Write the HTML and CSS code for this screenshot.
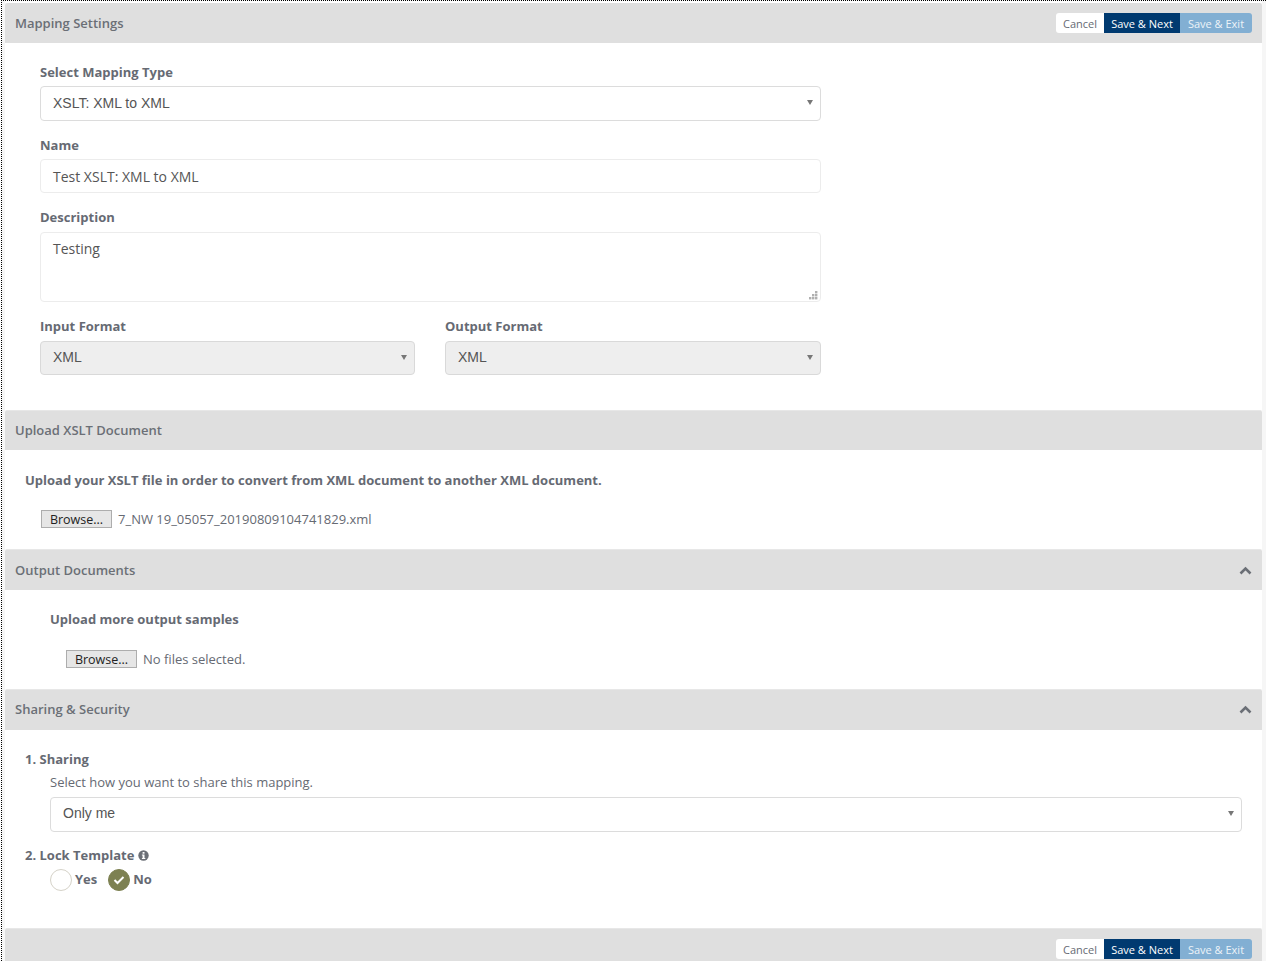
FILE: index.html
```html
<!DOCTYPE html>
<html lang="en">
<head>
<meta charset="utf-8">
<title>Mapping Settings</title>
<link rel="stylesheet" href="styles.css">
</head>
<body>
<div class="frame">
  <div class="page">
    <header class="bar bar-top">
      <h2 class="bar-title">Mapping Settings</h2>
      <div class="btn-group">
        <button class="btn btn-cancel" type="button">Cancel</button>
        <button class="btn btn-next" type="button">Save &amp; Next</button>
        <button class="btn btn-exit" type="button">Save &amp; Exit</button>
      </div>
    </header>
    <section class="settings">
      <div class="settings-col">
        <div class="field field-type">
          <label class="label">Select Mapping Type</label>
          <div class="select select-arial">XSLT: XML to XML<span class="caret"></span></div>
        </div>
        <div class="field field-name">
          <label class="label">Name</label>
          <div class="input">Test XSLT: XML to XML</div>
        </div>
        <div class="field field-desc">
          <label class="label">Description</label>
          <div class="textarea">Testing
            <svg class="grip" width="9" height="9" viewBox="0 0 9 9"><g fill="#b0b0b0"><rect x="6" y="0" width="2.4" height="2.4"/><rect x="3" y="3" width="2.4" height="2.4"/><rect x="6" y="3" width="2.4" height="2.4"/><rect x="0" y="6" width="2.4" height="2.4"/><rect x="3" y="6" width="2.4" height="2.4"/><rect x="6" y="6" width="2.4" height="2.4"/></g></svg>
          </div>
        </div>
        <div class="field-row">
          <div class="field">
            <label class="label">Input Format</label>
            <div class="select select-off">XML<span class="caret"></span></div>
          </div>
          <div class="field">
            <label class="label">Output Format</label>
            <div class="select select-off">XML<span class="caret"></span></div>
          </div>
        </div>
      </div>
    </section>

    <header class="bar bar-upload"><h2 class="bar-title">Upload XSLT Document</h2></header>
    <section class="upload">
      <p class="strong-line">Upload your XSLT file in order to convert from XML document to another XML document.</p>
      <div class="file-row">
        <span class="browse">Browse...</span><span class="file-name">7_NW 19_05057_20190809104741829.xml</span>
      </div>
    </section>

    <header class="bar bar-output">
      <h2 class="bar-title">Output Documents</h2>
      <svg class="chev" width="13" height="9" viewBox="0 0 13 9"><path d="M1.5 7.5 6.5 2.5 11.5 7.5" fill="none" stroke="#6b6f76" stroke-width="2.6"/></svg>
    </header>
    <section class="output">
      <p class="strong-line">Upload more output samples</p>
      <div class="file-row">
        <span class="browse">Browse...</span><span class="file-name">No files selected.</span>
      </div>
    </section>

    <header class="bar bar-share">
      <h2 class="bar-title">Sharing &amp; Security</h2>
      <svg class="chev" width="13" height="9" viewBox="0 0 13 9"><path d="M1.5 7.5 6.5 2.5 11.5 7.5" fill="none" stroke="#6b6f76" stroke-width="2.6"/></svg>
    </header>
    <section class="share">
      <div class="label num">1. Sharing</div>
      <div class="hint">Select how you want to share this mapping.</div>
      <div class="select select-arial select-wide">Only me<span class="caret"></span></div>
      <div class="label num lock">2. Lock Template
        <svg class="info" width="11" height="11" viewBox="0 0 11 11"><circle cx="5.5" cy="5.5" r="5.2" fill="#6b6f76"/><rect x="4.6" y="2" width="1.9" height="1.7" fill="#fff"/><path d="M3.9 4.6H6.5V8H7.3V9H3.9V8H4.6V5.6H3.9Z" fill="#fff"/></svg>
      </div>
      <div class="radios">
        <span class="radio"></span><span class="radio-text">Yes</span>
        <span class="radio radio-on"><svg width="12" height="10" viewBox="0 0 12 10"><path d="M1.5 5 4.5 8 10.5 2" fill="none" stroke="#fff" stroke-width="2"/></svg></span><span class="radio-text">No</span>
      </div>
    </section>

    <footer class="bar bar-bottom">
      <div class="btn-group">
        <button class="btn btn-cancel" type="button">Cancel</button>
        <button class="btn btn-next" type="button">Save &amp; Next</button>
        <button class="btn btn-exit" type="button">Save &amp; Exit</button>
      </div>
    </footer>
  </div>
</div>
</body>
</html>
```
FILE: styles.css
```css
* { box-sizing: border-box; }
html, body { margin: 0; padding: 0; height: 100%; overflow: hidden; background: #fff; }
body { font-family: "Open Sans", sans-serif; font-size: 14px; color: #666a73; }
.frame { height: 961px; border-top: 1px dotted #000; border-left: 1px dotted #000; background: #f6f6f6; padding: 0 4px 0 3px; margin-left: 1px; }
.page { background: #fff; padding-top: 2px; }
.bar { display: flex; align-items: center; justify-content: space-between; background: #dfdfdf; padding: 0 10px; height: 40px; border-radius: 2px 2px 0 0; }
.bar-title { margin: 0; font-size: 13px; font-weight: 600; color: #6b6f76; }
.btn-group { display: flex; margin-right: 0; }
.btn { height: 20px; padding: 0; border: 0; font: 400 11px "Open Sans", sans-serif; }
.btn-cancel { width: 48px; background: #fff; color: #666a73; border-radius: 3px 0 0 3px; }
.btn-next { width: 76px; background: #003a70; color: #fff; }
.btn-exit { width: 72px; background: #82afd3; color: #edf3f8; border-radius: 0 3px 3px 0; }
.settings { height: 367px; padding: 19px 0 0 35px; }
.settings-col { width: 781px; }
.label { display: block; font-size: 13px; font-weight: 700; color: #666a73; line-height: 20px; }
.field { display: flex; flex-direction: column; gap: 4px; }
.field-name { margin-top: 14px; }
.field-desc { margin-top: 14px; gap: 5px; }
.field-row { display: grid; grid-template-columns: 375px 376px; gap: 30px; margin-top: 14px; }
.field-row .field { gap: 5px; }
.select, .input, .textarea { position: relative; border: 1px solid #e3e3e3; border-radius: 4px; background: #fff; padding: 0 12px; font-size: 14px; color: #555; }
.select { height: 35px; line-height: 32px; border-color: #dcdcdc; }
.select-arial, .select-off { font-family: "Liberation Sans", sans-serif; }
.select-off { background: #eee; border-color: #d9d9d9; height: 34px; line-height: 31px; }
.input { height: 34px; line-height: 34px; border-color: #ececec; }
.textarea { height: 70px; line-height: 20px; padding-top: 6px; border-color: #ececec; }
.grip { position: absolute; right: 2px; bottom: 1px; }
.caret { position: absolute; right: 7px; top: 13px; width: 0; height: 0; border: 3px solid transparent; border-top: 5px solid #777; border-bottom: 0; }
.bar-upload, .bar-output, .bar-share { border-top: 1px solid #e7e7e7; }
.bar-upload { padding-bottom: 1px; }
.upload { height: 99px; padding: 20px 0 0 20px; }
.strong-line { margin: 0; font-size: 13px; font-weight: 700; line-height: 20px; color: #666a73; }
.file-row { display: flex; align-items: center; margin-top: 20px; height: 18px; }
.upload .file-row { margin-left: 16px; }
.browse { display: inline-block; width: 71px; height: 18px; text-align: center; background: #e6e6e6; border: 1px solid #adadad; font: 400 12.5px/18px "Open Sans", sans-serif; color: #222; }
.file-name { margin-left: 6px; font-size: 13px; color: #666a73; }
.bar-output { height: 41px; }
.output { height: 99px; padding: 19px 0 0 45px; }
.output .file-row { margin-left: 16px; margin-top: 21px; }
.bar-share { height: 41px; padding-bottom: 1px; }
.bar-share .bar-title { margin-bottom: 2px; }
.share { height: 198px; padding: 19px 20px 0; }
.hint { margin: 3px 0 0 25px; font-size: 13px; line-height: 20px; color: #666a73; }
.select-wide { margin: 5px 0 0 25px; line-height: 31px; }
.lock { margin-top: 13px; }
.info { vertical-align: -1px; }
.radios { display: flex; align-items: center; margin: 4px 0 0 25px; height: 22px; }
.radio { display: inline-flex; align-items: center; justify-content: center; width: 22px; height: 22px; border-radius: 50%; border: 1px solid #d5d2c8; background: #fff; }
.radio-on { background: #7d8152; border-color: #7d8152; margin-left: 11px; }
.radio-text { margin: 0 0 2px 3px; font-size: 13px; font-weight: 700; color: #666a73; }
.bar-bottom { border-top: 1px solid #e7e7e7; justify-content: flex-end; height: 34px; padding-top: 10px; align-items: flex-start; }
```
